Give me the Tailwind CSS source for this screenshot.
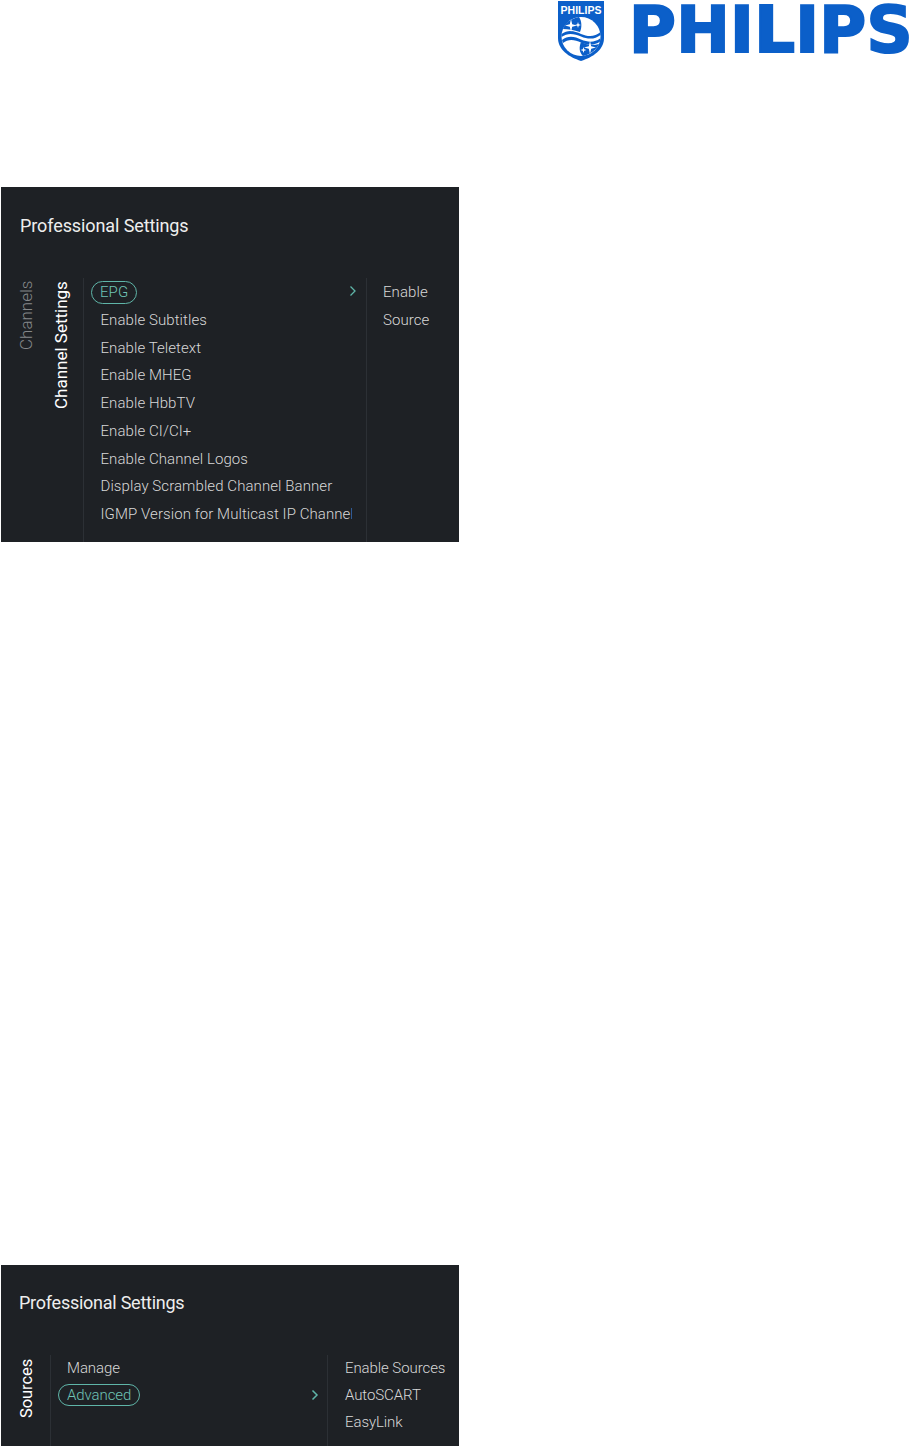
<!DOCTYPE html>
<html lang="en">
<head>
  <meta charset="UTF-8">
  <title>Professional Settings</title>
  <script src="https://cdn.jsdelivr.net/npm/@tailwindcss/browser@4"></script>
</head>
<body class="bg-white h-[1446px] w-[911px] overflow-hidden font-['Roboto',sans-serif]">
  <!-- logo -->
  <div class="h-[187px] flex items-start pl-[558px]">
    <svg class="mt-[1px] shrink-0" width="46" height="60" viewBox="0 0 46 60">
      <path d="M0 0H46V37C46 49 35 56 23 60C11 56 0 49 0 37Z" fill="#0b5fc9"/>
      <text x="23" y="13" text-anchor="middle" font-family="Liberation Sans" font-weight="700" font-size="10.5" fill="#fff">PHILIPS</text>
      <circle cx="23" cy="35.5" r="19.5" fill="#fff"/>
      <!-- star patches -->
      <path d="M5 28C7 22 12 18 21 16C24 20 24 27 22 31C16 29 10 28 5 28Z" fill="#0b5fc9"/>
      <path d="M41 43C38 49 33 53 25 55C21 51 21 46 23 41C29 44 35 45 41 43Z" fill="#0b5fc9"/>
      <!-- waves -->
      <path d="M3.5 33C10 28 17 30 23 33C30 36 37 36 42.5 31V34C37 38.500 30 38.500 23 35.500C17 33 10 31 3.500 36Z" fill="#0b5fc9"/>
      <path d="M4 39C10 34 17 35.500 23 38.500C30 41.500 37 41.500 42 37.500V40.500C37 44.500 30 44.500 23 41.500C17 38.500 10 37.500 5 42Z" fill="#0b5fc9"/>
      <!-- stars -->
      <path d="M13 18L14.200 23.300L19 24.500L14.200 25.700L13 31L11.800 25.700L7 24.500L11.800 23.300Z" fill="#fff"/>
      <path d="M20 21L20.700 23.300L23 24L20.700 24.700L20 27L19.300 24.700L17 24L19.300 23.300Z" fill="#fff"/>
      <path d="M32 40L33.200 45.300L38 46.500L33.200 47.700L32 53L30.800 47.700L26 46.500L30.800 45.300Z" fill="#fff"/>
      <path d="M25.500 46L26.200 48.300L28.500 49L26.200 49.700L25.500 52L24.800 49.700L22.500 49L24.800 48.300Z" fill="#fff"/>
    </svg>
    <div class="ml-[25px] mt-[1px] whitespace-nowrap font-['DejaVu_Sans',sans-serif] font-bold text-[64px] leading-[58px] tracking-[0.3px] [-webkit-text-stroke:2px_#0b5fc9] text-[#0b5fc9]">PHILIPS</div>
  </div>

  <!-- channels panel -->
  <section class="ml-[1px] w-[458px] h-[355px] bg-[#1e2125] text-[#d8d8d8] text-[15px] tracking-[0.08px] font-light">
    <h2 class="pl-[19px] pt-[27px] h-[91px] text-[18px] leading-[24px] tracking-[-0.1px] font-normal text-[#eeeeee]">Professional Settings</h2>
    <div class="flex h-[264px]">
      <div class="w-[83px] shrink-0 border-r border-[#2c3035] flex pl-[15px] pt-[2px]">
        <span class="[writing-mode:vertical-rl] rotate-180 h-[70px] w-[20px] text-[17px] leading-[20px] tracking-normal text-[#85888a]">Channels</span>
        <span class="[writing-mode:vertical-rl] rotate-180 h-[129px] w-[20px] ml-[15px] text-[17px] leading-[20px] tracking-normal font-normal text-white">Channel Settings</span>
      </div>
      <div class="w-[283px] shrink-0 border-r border-[#2c3035]">
        <div class="h-[29px] pb-[1px] flex items-center">
          <span class="ml-[7px] px-[8px] h-[23px] leading-[21px] rounded-full border border-[#5fb5a8] text-[#6fc4b6]">EPG</span>
          <svg class="ml-auto mr-[9px] mb-[2px]" width="8" height="12" viewBox="0 0 8 12" fill="none" stroke="#5fb5a8" stroke-width="1.3"><path d="M1.500 1.500L6 6L1.500 10.500"/></svg>
        </div>
        <ul class="pl-[16.500px] leading-[27.700px] whitespace-nowrap">
          <li>Enable Subtitles</li>
          <li>Enable Teletext</li>
          <li>Enable MHEG</li>
          <li>Enable HbbTV</li>
          <li>Enable CI/CI+</li>
          <li>Enable Channel Logos</li>
          <li>Display Scrambled Channel Banner</li>
          <li class="w-[251px] overflow-hidden">IGMP Version for Multicast IP Channel</li>
        </ul>
      </div>
      <ul class="pl-[16px] pt-[1px] leading-[27.800px]">
        <li>Enable</li>
        <li>Source</li>
      </ul>
    </div>
  </section>

  <!-- sources panel -->
  <section class="ml-[1px] mt-[723px] w-[458px] h-[181px] bg-[#1e2125] text-[#d8d8d8] text-[15px] tracking-[-0.08px] font-light">
    <h2 class="pl-[18px] pt-[26px] h-[90px] text-[18px] leading-[24px] tracking-[-0.25px] font-normal text-[#eeeeee]">Professional Settings</h2>
    <div class="flex h-[91px]">
      <div class="w-[50px] shrink-0 border-r border-[#2c3035] pl-[16px] pt-[1px]">
        <span class="block [writing-mode:vertical-rl] rotate-180 h-[62px] w-[20px] text-[16.500px] leading-[20px] font-normal text-white">Sources</span>
      </div>
      <div class="w-[277px] shrink-0 border-r border-[#2c3035]">
        <div class="pl-[16px] h-[27px] leading-[27px]">Manage</div>
        <div class="h-[25px] flex items-center">
          <span class="ml-[7px] px-[8px] h-[22px] leading-[20px] rounded-full border border-[#5fb5a8] text-[#6fc4b6]">Advanced</span>
          <svg class="ml-auto mr-[8px]" width="8" height="12" viewBox="0 0 8 12" fill="none" stroke="#5fb5a8" stroke-width="1.5"><path d="M1.500 1.500L6 6L1.500 10.500"/></svg>
        </div>
      </div>
      <ul class="pl-[17px] leading-[27px] whitespace-nowrap">
        <li>Enable Sources</li>
        <li>AutoSCART</li>
        <li>EasyLink</li>
      </ul>
    </div>
  </section>
</body>
</html>
